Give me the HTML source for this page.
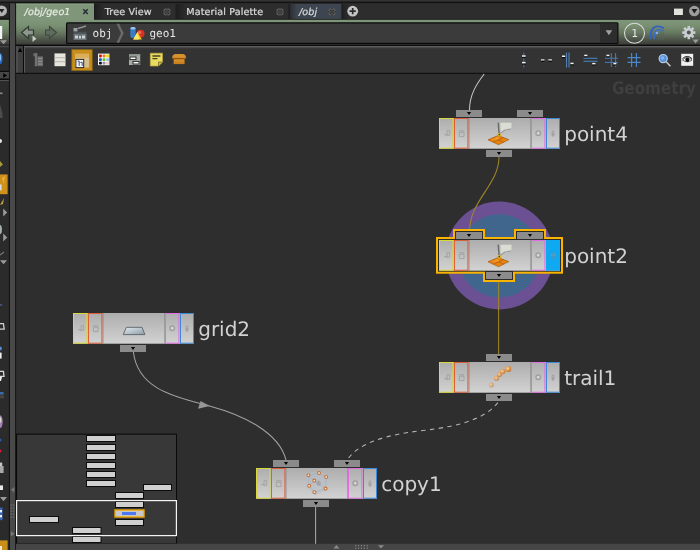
<!DOCTYPE html>
<html><head><meta charset="utf-8"><title>Network Editor</title>
<style>html,body{margin:0;padding:0;background:#2e2e2e;overflow:hidden}svg{display:block;will-change:transform;font-family:"DejaVu Sans","Liberation Sans",sans-serif}text{text-rendering:geometricPrecision}</style></head>
<body>
<svg width="700" height="550" viewBox="0 0 700 550">
<defs><linearGradient id="body" x1="0" y1="0" x2="0" y2="1"><stop offset="0" stop-color="#adadad"/><stop offset="1" stop-color="#d3d3d3"/></linearGradient><linearGradient id="green" x1="0" y1="0" x2="0" y2="1"><stop offset="0" stop-color="#80967a"/><stop offset=".25" stop-color="#798f71"/><stop offset=".5" stop-color="#687a62"/><stop offset=".75" stop-color="#51594d"/><stop offset=".9" stop-color="#42463f"/><stop offset="1" stop-color="#3a3c38"/></linearGradient><linearGradient id="gridg" x1="0" y1="0" x2="1" y2="1"><stop offset="0" stop-color="#e4ecf0"/><stop offset="1" stop-color="#8c9ca8"/></linearGradient><radialGradient id="ball" cx=".4" cy=".4" r=".7"><stop offset="0" stop-color="#fad4a4"/><stop offset=".6" stop-color="#df9244"/><stop offset="1" stop-color="#a65e1c"/></radialGradient><linearGradient id="tabg" x1="0" y1="0" x2="1" y2="0"><stop offset="0" stop-color="#1f1f1f"/><stop offset="1" stop-color="#1f1f1f" stop-opacity="0"/></linearGradient></defs>
<rect x="0" y="0" width="700" height="550" fill="#2e2e2e"/>
<rect x="0" y="0" width="700" height="2" fill="#343434"/>
<rect x="0" y="1.6" width="700" height="1.8" fill="#141414"/>
<rect x="16" y="3.4" width="684" height="16.6" fill="#2d2d2d"/>
<rect x="16" y="3.7" width="78" height="17" fill="#80967a"/>
<rect x="16" y="3.6" width="78" height="1" fill="#8da286"/>
<rect x="175.5" y="4" width="1.5" height="15.5" fill="#1f1f1f"/>
<rect x="94" y="4" width="1" height="15.5" fill="#1c1c1c"/>
<rect x="290" y="4" width="51.5" height="15.5" fill="#3d4650"/>
<rect x="288.5" y="4" width="1.5" height="15.5" fill="#1f1f1f"/>
<rect x="341.5" y="4" width="1.5" height="15.5" fill="#1f1f1f"/>
<rect x="95" y="4" width="9" height="15" fill="url(#tabg)"/><rect x="177" y="4" width="9" height="15" fill="url(#tabg)"/><rect x="290" y="4" width="7" height="15.5" fill="url(#tabg)" opacity=".6"/><rect x="343" y="4" width="6" height="15" fill="url(#tabg)" opacity=".7"/>
<rect x="94" y="18.9" width="606" height="1" fill="#1a1a1a"/>
<rect x="16" y="19.8" width="684" height="25" fill="url(#green)"/>
<rect x="66" y="22.3" width="552.5" height="21.6" rx="1.5" fill="#0a0a0a"/>
<rect x="67.2" y="23.5" width="550" height="19.3" fill="#3b3b3b"/>
<rect x="600" y="23.5" width="17.2" height="19.3" fill="#2d2d2d"/>
<path d="M605.6,30.2 h6.6 l-3.3,5 z" fill="#a0a0a0"/>
<rect x="0" y="44.7" width="700" height="1.25" fill="#060606"/>

<g font-size="9.6" fill="#dadada" stroke="#dadada" stroke-width=".22">
<text x="24.6" y="15.4" font-style="italic" fill="#e6ebe2" stroke="#e6ebe2" letter-spacing=".1">/obj/geo1</text>
<text x="104.8" y="15.4" letter-spacing=".12">Tree View</text>
<text x="186.3" y="15.4" letter-spacing=".1">Material Palette</text>
<text x="299" y="15.4" font-style="italic" letter-spacing=".1">/obj</text>
</g>
<path d="M83.3,9.3 l4.4,4.6 M87.7,9.3 l-4.4,4.6" stroke="#262c3a" stroke-width="1.5" fill="none"/>
<g><circle cx="167" cy="11.8" r="3.9" fill="#5b5b5b"/><path d="M165.1,9.9 l3.8,3.8 M168.9,9.9 l-3.8,3.8" stroke="#2c2c2c" stroke-width="1.3"/><path d="M167,7.9 v1.4 M167,14.3 v1.4 M163.1,11.8 h1.4 M169.5,11.8 h1.4" stroke="#2c2c2c" stroke-width="1.2"/><circle cx="167" cy="11.8" r=".9" fill="#3c5048"/></g>
<g><circle cx="280" cy="11.8" r="3.9" fill="#5b5b5b"/><path d="M278.1,9.9 l3.8,3.8 M281.9,9.9 l-3.8,3.8" stroke="#2c2c2c" stroke-width="1.3"/><path d="M280,7.9 v1.4 M280,14.3 v1.4 M276.1,11.8 h1.4 M282.5,11.8 h1.4" stroke="#2c2c2c" stroke-width="1.2"/><circle cx="280" cy="11.8" r=".9" fill="#3c5048"/></g>
<g><circle cx="332" cy="11.8" r="3.9" fill="#5b5b5b"/><path d="M330.1,9.9 l3.8,3.8 M333.9,9.9 l-3.8,3.8" stroke="#2c2c2c" stroke-width="1.3"/><path d="M332,7.9 v1.4 M332,14.3 v1.4 M328.1,11.8 h1.4 M334.5,11.8 h1.4" stroke="#2c2c2c" stroke-width="1.2"/><circle cx="332" cy="11.8" r=".9" fill="#3c5048"/></g>
<circle cx="352.7" cy="11.2" r="5.4" fill="#c4c4c4"/><path d="M349.6,11.2 h6.2 M352.7,8.1 v6.2" stroke="#2b2b2b" stroke-width="1.7"/>
<rect x="674" y="8.6" width="8.9" height="6.4" fill="#e2e2dc"/>
<circle cx="694.3" cy="11" r="5.3" fill="#9c9c9c"/><path d="M691.4,9 h6 l-3,4.6 z" fill="#1c1c1c"/>
<path d="M21.5,32.5 l7,-6 v3.5 h5 v5 h-5 v3.5 z" fill="#8f978d" stroke="#2e3a34" stroke-width="1.2"/>
<path d="M32.5,35.5 l4,3.2 l-4,3.2 z" fill="#c8ccc4"/>
<path d="M56.5,32.5 l-7,-6 v3.5 h-4 v5 h4 v3.5 z" fill="#606b5d" stroke="#3e4a40" stroke-width="1.1"/>
<g font-family="'DejaVu Sans Mono','Liberation Mono',monospace" font-size="11" fill="#e6e6e6">
<text x="92.6" y="36.6">obj</text><text x="149.5" y="36.6">geo1</text></g>
<rect x="73.5" y="33.5" width="13" height="6.5" fill="#6a7478"/><rect x="73.5" y="28" width="4" height="3.5" fill="#9aa4a8"/><path d="M75,35.5 h3 v3 h-3z M79,36 h2 v2.5 h-2z M82,35.5 h3 v3 h-3z" fill="#c8d0d2"/><path d="M78,28.5 l8,-2.5" stroke="#8a9296" stroke-width="1.6"/><path d="M73.5,32.3 h13" stroke="#50585c" stroke-width="1"/>
<path d="M116.5,23.8 l4.5,9.4 l-4.5,9.6 h2.6 l4.6,-9.6 l-4.6,-9.4 z" fill="#6a6a6a"/>
<rect x="130.3" y="27.6" width="5.4" height="10.5" rx="2" fill="#3a7cc8"/><ellipse cx="133" cy="28.3" rx="2.7" ry="1.3" fill="#9cc4ee"/><circle cx="140.6" cy="33.6" r="3.9" fill="#d83220"/><circle cx="139.6" cy="32.4" r="1.6" fill="#ee7060"/><path d="M137.5,32 l4.3,7.4 h-8.6 z" fill="#f2d020"/><path d="M137.5,32 l1.5,7.4 h-5.8z" fill="#f8e870"/>
<circle cx="634.5" cy="33.2" r="10" fill="none" stroke="#dadada" stroke-width="1.1"/>
<text x="631.2" y="37.2" font-family="'DejaVu Sans Mono',monospace" font-size="11" fill="#e6e6e6">1</text>
<g fill="none" stroke-linecap="butt"><path d="M650.3,39.2 C650.2,31 652,26.7 657.5,26.4 C660,26.3 662,27 664,28.3" stroke="#3363c2" stroke-width="1.9"/><path d="M654,39.2 C654,33 655,30 658.5,29.8 C660.5,29.7 662,30.2 664,30.9" stroke="#3b6cc6" stroke-width="1.6"/><path d="M658.3,32.4 v7.4 M660.8,32 v8 M663.3,32 v8" stroke="#55665e" stroke-width="1.1" opacity=".75"/></g><circle cx="656.9" cy="33" r="1.35" fill="#7cb2ec"/>
<g transform="translate(688.8,32.6)"><rect x="-1.3" y="-6.6" width="2.6" height="3" fill="#c9ced2" transform="rotate(0)"/><rect x="-1.3" y="-6.6" width="2.6" height="3" fill="#c9ced2" transform="rotate(45)"/><rect x="-1.3" y="-6.6" width="2.6" height="3" fill="#c9ced2" transform="rotate(90)"/><rect x="-1.3" y="-6.6" width="2.6" height="3" fill="#c9ced2" transform="rotate(135)"/><rect x="-1.3" y="-6.6" width="2.6" height="3" fill="#c9ced2" transform="rotate(180)"/><rect x="-1.3" y="-6.6" width="2.6" height="3" fill="#c9ced2" transform="rotate(225)"/><rect x="-1.3" y="-6.6" width="2.6" height="3" fill="#c9ced2" transform="rotate(270)"/><rect x="-1.3" y="-6.6" width="2.6" height="3" fill="#c9ced2" transform="rotate(315)"/><circle r="4.7" fill="#c9ced2"/><circle r="2" fill="#50584c"/></g>
<path d="M692.4,39.4 h6.4 l-3.2,4 z" fill="#9a9a9a"/>
<rect x="16" y="45.95" width="7.4" height="27" fill="#404040"/>
<rect x="16.3" y="45.95" width="1.2" height="27" fill="#5c5c5c"/>
<path d="M17.9,52 h4.4 l-2.2,-4.2 z" fill="#000"/>
<rect x="22.95" y="45.95" width="1.05" height="27" fill="#0a0a0a"/>
<rect x="24" y="45.95" width="676" height="27" fill="#333333"/>
<rect x="24" y="45.95" width="676" height="1.5" fill="#5e5e5e"/><rect x="24" y="47.45" width="676" height=".8" fill="#4a4a4a"/>
<rect x="24" y="45.95" width="1.1" height="27" fill="#585858"/>
<rect x="16" y="72.8" width="684" height="1" fill="#0a0a0a"/>
<rect x="33.4" y="53.2" width="3" height="3" fill="#6a6a6a"/><rect x="34.8" y="53.2" width="2.6" height="13" fill="#727272"/><rect x="37.4" y="56.4" width="5.6" height="9.8" fill="#6a6a6a"/><path d="M38,58.4 h4.4 M38,61.3 h4.4 M38,64.2 h4.4" stroke="#8c8c8c" stroke-width="1.2"/>
<rect x="54.5" y="53.4" width="11" height="12.8" fill="#e6e6de"/><path d="M54.5,57.7 h11 M54.5,61.7 h11" stroke="#b4b4ac" stroke-width="1"/>
<rect x="71.8" y="49.6" width="20.4" height="21" fill="#c78e1c"/><rect x="71.8" y="49.6" width="20.4" height="21" fill="none" stroke="#8a6416" stroke-width=".8"/>
<rect x="75" y="53.8" width="14" height="13.8" fill="#d9bf8c"/><rect x="75" y="53.8" width="14" height="4" fill="#dcae58"/>
<rect x="75.9" y="59.4" width="7.8" height="8.2" fill="#f4f4f4" stroke="#2c2c2c" stroke-width="1"/><path d="M77.6,61.2 h1.6 v4.6 M80.4,62.4 h1.8 v3.4" stroke="#3a4a7a" stroke-width="1" fill="none"/>
<rect x="98" y="53.6" width="11.4" height="11.6" fill="#f4f4f4"/>
<rect x="99.0" y="54.6" width="2.8" height="2.8" rx=".8" fill="#e01010"/>
<rect x="102.6" y="54.6" width="2.8" height="2.8" rx=".8" fill="#f08018"/>
<rect x="106.2" y="54.6" width="2.8" height="2.8" rx=".8" fill="#f0d810"/>
<rect x="99.0" y="58.2" width="2.8" height="2.8" rx=".8" fill="#1858c8"/>
<rect x="102.6" y="58.2" width="2.8" height="2.8" rx=".8" fill="#58c818"/>
<rect x="106.2" y="58.2" width="2.8" height="2.8" rx=".8" fill="#98b8e8"/>
<rect x="99.0" y="61.800000000000004" width="2.8" height="2.8" rx=".8" fill="#101010"/>
<rect x="102.6" y="61.800000000000004" width="2.8" height="2.8" rx=".8" fill="#9890a8"/>
<rect x="106.2" y="61.800000000000004" width="2.8" height="2.8" rx=".8" fill="#f0c8c8"/>
<rect x="129" y="54" width="11.2" height="11" fill="#a4aca6"/><rect x="130" y="57" width="6" height="2.6" fill="#fff" stroke="#1c1c1c" stroke-width=".9"/><rect x="133" y="61.4" width="6" height="2.6" fill="#fff" stroke="#1c1c1c" stroke-width=".9"/><rect x="129" y="54" width="11.2" height="1.6" fill="#8a928c"/>
<path d="M150.3,53.2 h12.2 v8.8 l-4,4 h-8.2 z" fill="#e9da62" stroke="#b8a83c" stroke-width=".7"/><path d="M158.5,66 v-4 h4" fill="#c8b848" stroke="#6a6020" stroke-width=".7"/><path d="M152.4,56 h8 M152.4,58.6 h5" stroke="#4a4420" stroke-width="1.3"/>
<path d="M172.3,57.5 q0,-3.5 3.5,-3.5 h6.6 q3.5,0 3.5,3.5 v1.2 h-13.6 z" fill="#d9912e"/><rect x="173.6" y="58.7" width="11" height="5.4" fill="#c8801e"/><path d="M172.3,58.4 h13.6" stroke="#8a5410" stroke-width="1"/><path d="M174,61 h10" stroke="#e0a048" stroke-width=".8"/>
<path d="M523.8,52.5 v15" stroke="#4a86c8" stroke-width="1" opacity=".7"/><rect x="522" y="56" width="3.6" height="2" fill="#0a0a0a"/><rect x="522" y="55.3" width="3.6" height="1.5" fill="#f2f2f2"/><rect x="522" y="62.6" width="3.6" height="2" fill="#0a0a0a"/><rect x="522" y="61.9" width="3.6" height="1.5" fill="#f2f2f2"/>
<rect x="541" y="59.8" width="3.4" height="2" fill="#0a0a0a"/><rect x="541" y="59.099999999999994" width="3.4" height="1.5" fill="#f2f2f2"/><rect x="548.4" y="59.8" width="3.4" height="2" fill="#0a0a0a"/><rect x="548.4" y="59.099999999999994" width="3.4" height="1.5" fill="#f2f2f2"/><path d="M539.5,60 h12" stroke="#555" stroke-width=".6"/>
<path d="M566.6,52.5 v15 M569,52.5 v15" stroke="#5a92d4" stroke-width=".9"/><rect x="562" y="56.2" width="3.2" height="2" fill="#0a0a0a"/><rect x="562" y="55.5" width="3.2" height="1.5" fill="#f2f2f2"/><rect x="570.4" y="63.4" width="3.2" height="2" fill="#0a0a0a"/><rect x="570.4" y="62.699999999999996" width="3.2" height="1.5" fill="#f2f2f2"/>
<path d="M583.5,58.3 h14 M583.5,61.2 h14" stroke="#4a86c8" stroke-width="1.1"/><rect x="584.2" y="55.4" width="3.2" height="2" fill="#0a0a0a"/><rect x="584.2" y="54.699999999999996" width="3.2" height="1.5" fill="#f2f2f2"/><rect x="592.2" y="63.6" width="3.2" height="2" fill="#0a0a0a"/><rect x="592.2" y="62.9" width="3.2" height="1.5" fill="#f2f2f2"/>
<path d="M605,58.2 h13 M605,62.4 h13 M611.3,53 v14 M615.6,53 v14" stroke="#4a86c8" stroke-width="1" opacity=".9"/><rect x="606.4" y="55.4" width="3" height="2" fill="#0a0a0a"/><rect x="606.4" y="54.699999999999996" width="3" height="1.5" fill="#f2f2f2"/><rect x="613.4" y="63.6" width="3" height="2" fill="#0a0a0a"/><rect x="613.4" y="62.9" width="3" height="1.5" fill="#f2f2f2"/>
<path d="M627.5,57.6 h13 M627.5,62.4 h13 M631.6,53 v14 M636.4,53 v14" stroke="#4a86c8" stroke-width="1.2"/>
<circle cx="663.2" cy="58.6" r="4.1" fill="#5a92d8" stroke="#b8d0f0" stroke-width="1.1"/><circle cx="662.6" cy="58" r="1.8" fill="#86b4ec"/><path d="M666.4,62 l4,4.2" stroke="#c8c8c8" stroke-width="1.5"/>
<rect x="681.2" y="53.8" width="12" height="12" fill="#f0f0f0"/><path d="M682.5,60 q4.7,-5 9.5,0 q-4.7,3.6 -9.5,0z" fill="#fff" stroke="#3c3c3c" stroke-width=".8"/><circle cx="687.4" cy="59.8" r="2.1" fill="#0c0c0c"/><path d="M682.5,58.6 q4.7,-4.4 9.5,0" stroke="#2c2c2c" stroke-width="1" fill="none"/>
<text transform="translate(611.9,93.6) scale(.878,1)" font-size="17.3" font-weight="bold" fill="#3f3f3f">Geometry</text>
<rect x="0" y="3.4" width="9.6" height="546.6" fill="#2b2b2b"/>
<rect x="8.9" y="3.4" width="1" height="546.6" fill="#0e0e0e"/>
<rect x="9.9" y="3.4" width="5.3" height="546.6" fill="#494949"/>
<rect x="15.2" y="3.4" width=".9" height="546.6" fill="#141414"/>
<rect x="0" y="3.4" width="8.9" height="15" fill="#262626"/>
<circle cx="1.6" cy="10.8" r="5.4" fill="#b2b2b2"/><path d="M-1,9 h5.4 l-2.6,4 z" fill="#222"/>
<rect x="0" y="18.4" width="8.9" height="1.4" fill="#101010"/>
<rect x="0" y="19.8" width="8.9" height="24.4" fill="url(#green)"/>
<rect x="0" y="26" width="2.2" height="13" fill="#f2f2f2"/><path d="M0,40.2 h7 l-3.5,4 z" fill="#9a9a9a"/>
<rect x="0" y="45.95" width="8.9" height="1.3" fill="#484848"/>
<ellipse cx="0.2" cy="58.6" rx="2.3" ry="5.6" fill="#2a6ccc"/><ellipse cx="0" cy="57.6" rx="1.1" ry="3.4" fill="#8cc0f4"/>
<rect x="0" y="70.8" width="8.9" height="1.2" fill="#0c0c0c"/><rect x="0" y="72" width="8.9" height="6.6" fill="#474747"/><path d="M3.2,73.2 l4,2.3 l-4,2.3 z" fill="#000"/><rect x="0" y="78.6" width="8.9" height="1.4" fill="#0c0c0c"/><rect x="0" y="80" width="8.9" height="1" fill="#525252"/>
<rect x="0" y="92.5" width="2.5" height="1.6" fill="#8a8a8a"/>
<path d="M0,104 l2.6,10 v4 h-2.6z" fill="#555" opacity=".8"/>
<circle cx="0" cy="141" r="2" fill="#e8e8e8"/>
<path d="M0,161 l3,3.6 l-3,2.4z" fill="#a89a3a"/>
<rect x="0" y="174.4" width="7.6" height="19.8" fill="#d0901a"/><path d="M2,178 l3,-2 l-1.5,8z" fill="#e8b850" opacity=".8"/><rect x="0" y="184.4" width="1.6" height="6" fill="#d8dce0"/>
<path d="M0,205 l4,-7 l-1,6z" fill="#b8a440"/><path d="M3.2,208.4 l4,4 l-4,4 z" fill="#9a9a9a"/>
<ellipse cx="0" cy="229.6" rx="1.9" ry="4.6" fill="#a8b0b0"/><path d="M3.2,233.6 l4,4 l-4,4 z" fill="#9a9a9a"/>
<path d="M0,255 l4,-3" stroke="#777" stroke-width="1.2"/><path d="M0,260.2 h7 l-3.5,4 z" fill="#9a9a9a"/>
<path d="M0,304.5 l2,1" stroke="#4a5a9a" stroke-width="1.4"/>
<path d="M0,323.6 h3.4 l.8,5.6 h-4.2" fill="none" stroke="#d0d0d0" stroke-width="1.3"/>
<circle cx="0" cy="348.6" r="2" fill="#5a86cc"/><rect x="0" y="352.6" width="1.6" height="6" fill="#f0f0f0"/>
<path d="M0,371.4 h3.4 l.6,5 h-4" fill="none" stroke="#d8d8d8" stroke-width="1.3"/><path d="M0,377 h2 l-1,4 h-1z" fill="#f0f0f0"/>
<rect x="0" y="392" width="3.6" height="2.6" fill="#3a6aa8"/><rect x="0" y="395.4" width="4" height="3" fill="#4a4440"/>
<ellipse cx="0" cy="421.6" rx="2.7" ry="6.4" fill="#a880b8"/><ellipse cx="0" cy="420" rx="1.4" ry="3" fill="#d8d8d0"/>
<circle cx="0" cy="440" r="1.6" fill="#2a5aa8"/><circle cx="0" cy="451" r="1.4" fill="#e01838"/>
<rect x="0" y="462.6" width="2.2" height="8" fill="#c8c8c8"/><rect x="0" y="466" width="3.6" height="7" fill="#a8a8a8"/>
<rect x="0" y="485.4" width="3" height="4.6" fill="#e8e8e8"/><path d="M0,497 h7 l-3.5,4.2 z" fill="#9a9a9a"/>
<rect x="0" y="507.6" width="2.6" height="12.6" fill="#3a64b8"/><rect x="0" y="510" width="2" height="2.4" fill="#f0f0f0"/><rect x="0" y="515" width="2" height="2.4" fill="#f0f0f0"/>
<rect x="0" y="540.4" width="7.6" height="9.6" fill="#c8901a"/><rect x="0" y="546" width="2" height="4" fill="#f0e8d0"/>
<path d="M14.4,487 v5.4 l-3.6,-2.7 z" fill="#777"/><path d="M10.8,531 v5.4 l3.6,-2.7 z" fill="#777"/>
<rect x="10.5" y="504.4" width="1.3" height="1.3" fill="#727272"/>
<rect x="13.1" y="504.4" width="1.3" height="1.3" fill="#727272"/>
<rect x="10.5" y="507.4" width="1.3" height="1.3" fill="#727272"/>
<rect x="13.1" y="507.4" width="1.3" height="1.3" fill="#727272"/>
<rect x="10.5" y="510.4" width="1.3" height="1.3" fill="#727272"/>
<rect x="13.1" y="510.4" width="1.3" height="1.3" fill="#727272"/>
<rect x="10.5" y="513.4" width="1.3" height="1.3" fill="#727272"/>
<rect x="13.1" y="513.4" width="1.3" height="1.3" fill="#727272"/>
<rect x="10.5" y="516.4" width="1.3" height="1.3" fill="#727272"/>
<rect x="13.1" y="516.4" width="1.3" height="1.3" fill="#727272"/>
<circle cx="499.4" cy="255.5" r="53.9" fill="#6b5194"/><circle cx="499.4" cy="255.8" r="41.5" fill="#40668e"/>
<g fill="none" stroke-width="1.05">
<path d="M484.2,74 C 476.5,84 469.5,95 469.5,110" stroke="#c6c6c6"/>
<path d="M499,157 C 499,185 469.5,200 469.5,232" stroke="#9e8626"/>
<path d="M498.6,279 V354" stroke="#9e8626"/>
<path d="M133.4,352 C 138,390 176,396.8 209.5,406 C 243,415.2 279,432 286,460" stroke="#a2a2a2"/>
<path d="M499,401 C 487,418 462,426 423,430.5 C 384,435 359,443 347,460" stroke="#b4b4b4" stroke-dasharray="4.4 4.4" stroke-dashoffset="-2"/>
<path d="M315.6,507 V544" stroke="#a8a8a8"/>
</g>
<path d="M200.6,400.9 L198,408.7 L209.8,406.1 z" fill="#969696"/>
<g font-family="'DejaVu Sans','Liberation Sans',sans-serif">
<g><rect x="456" y="110" width="26" height="7" fill="#8b8b8b"/><path d="M466.9,111.9 h4.2 l-2.1,3z" fill="#000"/><rect x="517" y="110" width="26" height="7" fill="#8b8b8b"/><path d="M527.9,111.9 h4.2 l-2.1,3z" fill="#000"/><rect x="486" y="150" width="26" height="7" fill="#8b8b8b"/><path d="M496.9,151.9 h4.2 l-2.1,3z" fill="#000"/><rect x="439" y="118" width="121" height="30.7" fill="url(#body)"/><rect x="468.6" y="118" width="0.9" height="30.7" fill="#7d7d7d" opacity=".7"/><rect x="530.3" y="118" width="0.9" height="30.7" fill="#7d7d7d" opacity=".7"/><rect x="439.5" y="118.5" width="13.4" height="29.7" fill="none" stroke="#d8d83a" stroke-width="1"/><rect x="454.5" y="118.5" width="13.4" height="29.7" fill="none" stroke="#dc5e3a" stroke-width="1"/><rect x="531.5" y="118.5" width="13.4" height="29.7" fill="none" stroke="#e06ee0" stroke-width="1"/><rect x="546.5" y="118.5" width="13" height="29.7" fill="none" stroke="#3d89d8" stroke-width="1"/><g fill="none" stroke="#9a9a9a" stroke-width=".9" opacity=".85"><path d="M444,134.7 h3 M447,130.7 v5.5 M447,130.7 h2.6 v4.5 h-2.6"/><path d="M459,130.79999999999998 h5.4 M459.4,132.2 h4.6 v4.4 h-4.6 z"/><circle cx="538.2" cy="133.2" r="2.3" stroke-width="1.3"/></g><circle cx="538.2" cy="133.2" r="1.1" fill="#dcdcdc"/><ellipse cx="553" cy="133.6" rx="1.6" ry="3.1" fill="#989898" opacity=".75"/><path d="M551,132.39999999999998 h4" stroke="#b8b8b8" stroke-width=".7"/><g><path d="M488,139.8 L498,135.6 L508.8,139.6 L498.6,144.7 z" fill="#e8820e" stroke="#a85c10" stroke-width=".7"/><path d="M493,137.7 L503.7,142.2 M503.4,137.6 L493.3,142.3" stroke="#b86008" stroke-width=".8" fill="none"/><path d="M491,139.6 L498.2,136.8 L498.4,139.8 z" fill="#f8a838" opacity=".8"/><path d="M498.3,122.6 L499,133" stroke="#6c6c6c" stroke-width="1.5" fill="none"/><path d="M500,133.6 L505,129.8 L510.6,128.8" stroke="#6e6e6a" stroke-width=".8" fill="none"/><path d="M500.2,122.4 h11.6 v6 q-5,.8 -8,1.6 l-3,2.6 l-.6,-3 z" fill="#d9ddd4" stroke="#b0b4aa" stroke-width=".5"/><circle cx="499.3" cy="134.8" r="1.9" fill="#d2b424"/><circle cx="499.3" cy="134.6" r=".8" fill="#4c4410"/></g><text x="564.2" y="141.3" font-size="20" fill="#d2d2d2">point4</text></g>
<g><g fill="#f9b400" stroke="#f9b400" stroke-width="6" stroke-linejoin="miter"><rect x="439" y="240" width="121" height="30.7"/><rect x="456" y="232" width="26" height="7"/><rect x="517" y="232" width="26" height="7"/><rect x="486" y="272" width="26" height="7"/></g><g fill="#2b2b2b" stroke="#2b2b2b" stroke-width="2" stroke-linejoin="miter"><rect x="439" y="240" width="121" height="30.7"/><rect x="456" y="232" width="26" height="7"/><rect x="517" y="232" width="26" height="7"/><rect x="486" y="272" width="26" height="7"/></g><rect x="456" y="232" width="26" height="7" fill="#8b8b8b"/><path d="M466.9,233.9 h4.2 l-2.1,3z" fill="#000"/><rect x="517" y="232" width="26" height="7" fill="#8b8b8b"/><path d="M527.9,233.9 h4.2 l-2.1,3z" fill="#000"/><rect x="486" y="272" width="26" height="7" fill="#8b8b8b"/><path d="M496.9,273.9 h4.2 l-2.1,3z" fill="#000"/><rect x="439" y="240" width="121" height="30.7" fill="url(#body)"/><rect x="468.6" y="240" width="0.9" height="30.7" fill="#7d7d7d" opacity=".7"/><rect x="530.3" y="240" width="0.9" height="30.7" fill="#7d7d7d" opacity=".7"/><rect x="439.5" y="240.5" width="13.4" height="29.7" fill="none" stroke="#d8d83a" stroke-width="1"/><rect x="454.5" y="240.5" width="13.4" height="29.7" fill="none" stroke="#dc5e3a" stroke-width="1"/><rect x="531.5" y="240.5" width="13.4" height="29.7" fill="none" stroke="#e06ee0" stroke-width="1"/><rect x="546" y="240" width="14" height="30.7" fill="#0fa9f2"/><g fill="none" stroke="#9a9a9a" stroke-width=".9" opacity=".85"><path d="M444,256.7 h3 M447,252.7 v5.5 M447,252.7 h2.6 v4.5 h-2.6"/><path d="M459,252.79999999999998 h5.4 M459.4,254.2 h4.6 v4.4 h-4.6 z"/><circle cx="538.2" cy="255.2" r="2.3" stroke-width="1.3"/></g><circle cx="538.2" cy="255.2" r="1.1" fill="#dcdcdc"/><ellipse cx="553" cy="255.6" rx="1.6" ry="3.1" fill="#989898" opacity=".75"/><path d="M551,254.39999999999998 h4" stroke="#b8b8b8" stroke-width=".7"/><g fill="none" stroke="#3f93c4" stroke-width="1"><path d="M551,254 h4 M551,257 h4 M553,252 v8"/></g><g><path d="M488,261.8 L498,257.6 L508.8,261.6 L498.6,266.7 z" fill="#e8820e" stroke="#a85c10" stroke-width=".7"/><path d="M493,259.7 L503.7,264.2 M503.4,259.6 L493.3,264.3" stroke="#b86008" stroke-width=".8" fill="none"/><path d="M491,261.6 L498.2,258.8 L498.4,261.8 z" fill="#f8a838" opacity=".8"/><path d="M498.3,244.6 L499,255" stroke="#6c6c6c" stroke-width="1.5" fill="none"/><path d="M500,255.6 L505,251.8 L510.6,250.8" stroke="#6e6e6a" stroke-width=".8" fill="none"/><path d="M500.2,244.4 h11.6 v6 q-5,.8 -8,1.6 l-3,2.6 l-.6,-3 z" fill="#d9ddd4" stroke="#b0b4aa" stroke-width=".5"/><circle cx="499.3" cy="256.8" r="1.9" fill="#d2b424"/><circle cx="499.3" cy="256.6" r=".8" fill="#4c4410"/></g><text x="564.2" y="263.3" font-size="20" fill="#d2d2d2">point2</text></g>
<g><rect x="486" y="354" width="26" height="7" fill="#8b8b8b"/><path d="M496.9,355.9 h4.2 l-2.1,3z" fill="#000"/><rect x="486" y="394" width="26" height="7" fill="#8b8b8b"/><path d="M496.9,395.9 h4.2 l-2.1,3z" fill="#000"/><rect x="439" y="362" width="121" height="30.7" fill="url(#body)"/><rect x="468.6" y="362" width="0.9" height="30.7" fill="#7d7d7d" opacity=".7"/><rect x="530.3" y="362" width="0.9" height="30.7" fill="#7d7d7d" opacity=".7"/><rect x="439.5" y="362.5" width="13.4" height="29.7" fill="none" stroke="#d8d83a" stroke-width="1"/><rect x="454.5" y="362.5" width="13.4" height="29.7" fill="none" stroke="#dc5e3a" stroke-width="1"/><rect x="531.5" y="362.5" width="13.4" height="29.7" fill="none" stroke="#e06ee0" stroke-width="1"/><rect x="546.5" y="362.5" width="13" height="29.7" fill="none" stroke="#3d89d8" stroke-width="1"/><g fill="none" stroke="#9a9a9a" stroke-width=".9" opacity=".85"><path d="M444,378.7 h3 M447,374.7 v5.5 M447,374.7 h2.6 v4.5 h-2.6"/><path d="M459,374.8 h5.4 M459.4,376.2 h4.6 v4.4 h-4.6 z"/><circle cx="538.2" cy="377.2" r="2.3" stroke-width="1.3"/></g><circle cx="538.2" cy="377.2" r="1.1" fill="#dcdcdc"/><ellipse cx="553" cy="377.59999999999997" rx="1.6" ry="3.1" fill="#989898" opacity=".75"/><path d="M551,376.4 h4" stroke="#b8b8b8" stroke-width=".7"/><g><circle cx="491.3" cy="385" r="2.5" fill="url(#ball)" opacity="0.6"/><circle cx="496.5" cy="378.2" r="2.6" fill="url(#ball)" opacity="0.75"/><circle cx="499.5" cy="374.6" r="2.5" fill="url(#ball)" opacity="0.85"/><circle cx="502.6" cy="371.6" r="2.7" fill="url(#ball)" opacity="0.92"/><circle cx="508.3" cy="369" r="2.9" fill="url(#ball)" opacity="1"/></g><text x="564.2" y="385.3" font-size="20" fill="#d2d2d2">trail1</text></g>
<g><rect x="120" y="345" width="26" height="7" fill="#8b8b8b"/><path d="M130.9,346.9 h4.2 l-2.1,3z" fill="#000"/><rect x="73" y="313" width="121" height="30.7" fill="url(#body)"/><rect x="102.6" y="313" width="0.9" height="30.7" fill="#7d7d7d" opacity=".7"/><rect x="164.3" y="313" width="0.9" height="30.7" fill="#7d7d7d" opacity=".7"/><rect x="73.5" y="313.5" width="13.4" height="29.7" fill="none" stroke="#d8d83a" stroke-width="1"/><rect x="88.5" y="313.5" width="13.4" height="29.7" fill="none" stroke="#dc5e3a" stroke-width="1"/><rect x="165.5" y="313.5" width="13.4" height="29.7" fill="none" stroke="#e06ee0" stroke-width="1"/><rect x="180.5" y="313.5" width="13" height="29.7" fill="none" stroke="#3d89d8" stroke-width="1"/><g fill="none" stroke="#9a9a9a" stroke-width=".9" opacity=".85"><path d="M78,329.7 h3 M81,325.7 v5.5 M81,325.7 h2.6 v4.5 h-2.6"/><path d="M93,325.8 h5.4 M93.4,327.2 h4.6 v4.4 h-4.6 z"/><circle cx="172.2" cy="328.2" r="2.3" stroke-width="1.3"/></g><circle cx="172.2" cy="328.2" r="1.1" fill="#dcdcdc"/><ellipse cx="187" cy="328.59999999999997" rx="1.6" ry="3.1" fill="#989898" opacity=".75"/><path d="M185,327.4 h4" stroke="#b8b8b8" stroke-width=".7"/><path d="M126.4,327.3 H142 L144.9,334.6 H123.2 z" fill="url(#gridg)" stroke="#646c72" stroke-width="1"/><text x="198.2" y="336.3" font-size="20" fill="#d2d2d2">grid2</text></g>
<g><rect x="273" y="460" width="26" height="7" fill="#8b8b8b"/><path d="M283.9,461.9 h4.2 l-2.1,3z" fill="#000"/><rect x="334" y="460" width="26" height="7" fill="#8b8b8b"/><path d="M344.9,461.9 h4.2 l-2.1,3z" fill="#000"/><rect x="303" y="500" width="26" height="7" fill="#8b8b8b"/><path d="M313.9,501.9 h4.2 l-2.1,3z" fill="#000"/><rect x="256" y="468" width="121" height="30.7" fill="url(#body)"/><rect x="285.6" y="468" width="0.9" height="30.7" fill="#7d7d7d" opacity=".7"/><rect x="347.3" y="468" width="0.9" height="30.7" fill="#7d7d7d" opacity=".7"/><rect x="256.5" y="468.5" width="13.4" height="29.7" fill="none" stroke="#d8d83a" stroke-width="1"/><rect x="271.5" y="468.5" width="13.4" height="29.7" fill="none" stroke="#dc5e3a" stroke-width="1"/><rect x="348.5" y="468.5" width="13.4" height="29.7" fill="none" stroke="#e06ee0" stroke-width="1"/><rect x="363.5" y="468.5" width="13" height="29.7" fill="none" stroke="#3d89d8" stroke-width="1"/><g fill="none" stroke="#9a9a9a" stroke-width=".9" opacity=".85"><path d="M261,484.7 h3 M264,480.7 v5.5 M264,480.7 h2.6 v4.5 h-2.6"/><path d="M276,480.8 h5.4 M276.4,482.2 h4.6 v4.4 h-4.6 z"/><circle cx="355.2" cy="483.2" r="2.3" stroke-width="1.3"/></g><circle cx="355.2" cy="483.2" r="1.1" fill="#dcdcdc"/><ellipse cx="370" cy="483.59999999999997" rx="1.6" ry="3.1" fill="#989898" opacity=".75"/><path d="M368,482.4 h4" stroke="#b8b8b8" stroke-width=".7"/><g><path d="M306,473 L320,471.4 L328.6,476 L328,490 L315,495.4 L306,487 z" fill="#b6c2cc" opacity=".5"/><path d="M308.4,475.2 L319,473 L326.2,477 L325.5,488.6 L314.5,492.3 L309.2,485.7 z M308.4,475.2 L314.3,480.6 L309.2,485.7 M314.3,480.6 L325.5,488.6" fill="none" stroke="#a4b0ba" stroke-width=".7"/><ellipse cx="318.6" cy="483.2" rx="2.2" ry="2.6" fill="#a29ca0" opacity=".8"/><circle cx="308.4" cy="475.2" r="1.5" fill="#f4e0cc" stroke="#c4733a" stroke-width="1.1"/><circle cx="319" cy="473" r="1.5" fill="#f4e0cc" stroke="#c4733a" stroke-width="1.1"/><circle cx="326.2" cy="477" r="1.5" fill="#f4e0cc" stroke="#c4733a" stroke-width="1.1"/><circle cx="314.3" cy="480.6" r="1.5" fill="#f4e0cc" stroke="#c4733a" stroke-width="1.1"/><circle cx="309.2" cy="485.7" r="1.5" fill="#f4e0cc" stroke="#c4733a" stroke-width="1.1"/><circle cx="325.5" cy="488.6" r="1.5" fill="#f4e0cc" stroke="#c4733a" stroke-width="1.1"/><circle cx="314.5" cy="492.3" r="1.5" fill="#f4e0cc" stroke="#c4733a" stroke-width="1.1"/></g><text x="381.2" y="491.3" font-size="20" fill="#d2d2d2">copy1</text></g>
</g>
<rect x="16" y="433.6" width="161" height="110" fill="#0a0a0a"/>
<rect x="17.1" y="434.7" width="158.9" height="108.6" fill="#383838"/>
<rect x="86.5" y="435.5" width="29" height="6" fill="#cfcfcf" stroke="#0c0c0c" stroke-width="1"/>
<rect x="86.5" y="444.5" width="29" height="6" fill="#cfcfcf" stroke="#0c0c0c" stroke-width="1"/>
<rect x="86.5" y="453.5" width="29" height="6" fill="#cfcfcf" stroke="#0c0c0c" stroke-width="1"/>
<rect x="86.5" y="462.5" width="29" height="6" fill="#cfcfcf" stroke="#0c0c0c" stroke-width="1"/>
<rect x="86.5" y="471.5" width="29" height="6" fill="#cfcfcf" stroke="#0c0c0c" stroke-width="1"/>
<rect x="86.5" y="480.5" width="29" height="6" fill="#cfcfcf" stroke="#0c0c0c" stroke-width="1"/>
<rect x="143.5" y="484.5" width="28" height="6" fill="#cfcfcf" stroke="#0c0c0c" stroke-width="1"/>
<rect x="115.5" y="492.5" width="28" height="6" fill="#cfcfcf" stroke="#0c0c0c" stroke-width="1"/>
<rect x="115.5" y="501.5" width="28" height="6" fill="#cfcfcf" stroke="#0c0c0c" stroke-width="1"/>
<rect x="115" y="510" width="29" height="7" fill="#c8c8c8" stroke="#f2a900" stroke-width="1.4"/><rect x="122" y="512" width="14" height="3" fill="#4a78f0"/>
<rect x="115.5" y="519.5" width="28" height="6" fill="#cfcfcf" stroke="#0c0c0c" stroke-width="1"/>
<rect x="29.5" y="516.5" width="29" height="6" fill="#cfcfcf" stroke="#0c0c0c" stroke-width="1"/>
<rect x="72.5" y="527.5" width="28.5" height="6" fill="#cfcfcf" stroke="#0c0c0c" stroke-width="1"/>
<rect x="72.5" y="536.5" width="28.5" height="6" fill="#cfcfcf" stroke="#0c0c0c" stroke-width="1"/>
<rect x="16.6" y="500.6" width="159.8" height="35" fill="none" stroke="#f4f4f4" stroke-width="1.2"/>
<rect x="16" y="543.8" width="684" height="6.2" fill="#464646"/>
<path d="M333.4,548.4 h6 l-3,-3.4 z" fill="#8a8a8a"/><path d="M378,545.2 h6 l-3,3.4 z" fill="#8a8a8a"/>
<rect x="355.0" y="545.0" width="1.3" height="1.3" fill="#7c7c7c"/>
<rect x="357.9" y="545.0" width="1.3" height="1.3" fill="#7c7c7c"/>
<rect x="360.8" y="545.0" width="1.3" height="1.3" fill="#7c7c7c"/>
<rect x="363.7" y="545.0" width="1.3" height="1.3" fill="#7c7c7c"/>
<rect x="366.6" y="545.0" width="1.3" height="1.3" fill="#7c7c7c"/>
<rect x="355.0" y="547.6" width="1.3" height="1.3" fill="#7c7c7c"/>
<rect x="357.9" y="547.6" width="1.3" height="1.3" fill="#7c7c7c"/>
<rect x="360.8" y="547.6" width="1.3" height="1.3" fill="#7c7c7c"/>
<rect x="363.7" y="547.6" width="1.3" height="1.3" fill="#7c7c7c"/>
<rect x="366.6" y="547.6" width="1.3" height="1.3" fill="#7c7c7c"/>
</svg>
</body></html>
